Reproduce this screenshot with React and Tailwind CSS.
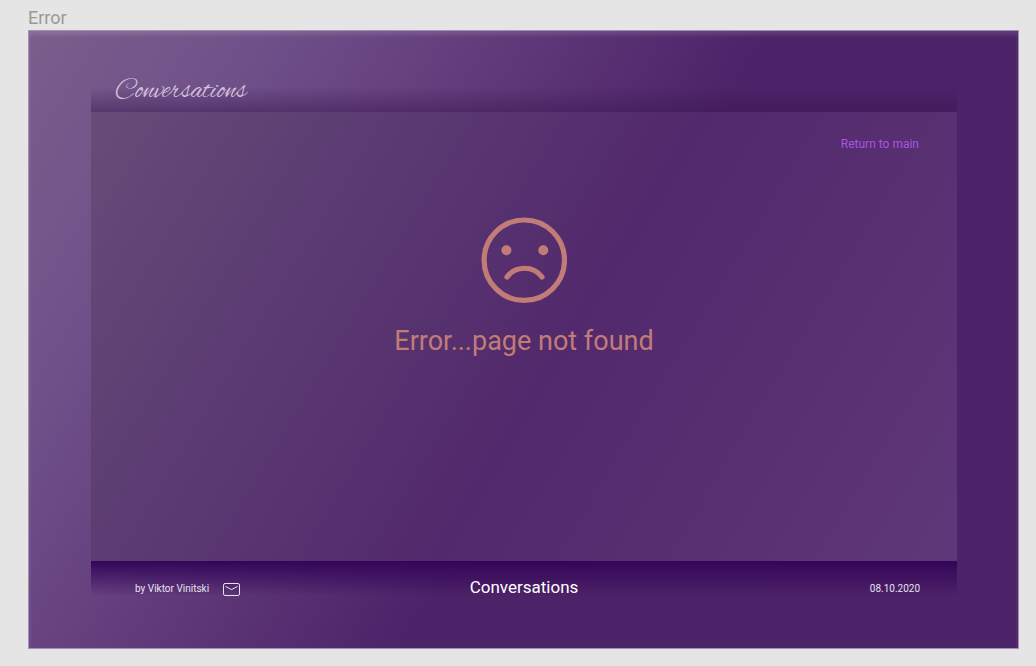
function SadFace() {
  return (
    <svg
      viewBox="0 0 86 86"
      className="size-[86px] text-[#c27c78]"
      fill="none"
      stroke="currentColor"
      role="img"
      aria-label="Sad face"
    >
      <circle cx="43.3" cy="43.2" r="40.2" strokeWidth="5.2" />
      <circle cx="25.4" cy="33.3" r="5" fill="currentColor" stroke="none" />
      <circle cx="62.3" cy="33.3" r="5" fill="currentColor" stroke="none" />
      <path d="M26 60C34.5 48.3 52.5 48.3 61 60" strokeWidth="5.2" strokeLinecap="round" />
    </svg>
  );
}

function Envelope() {
  return (
    <svg
      viewBox="0 0 17 13"
      className="h-[13px] w-[17px]"
      fill="none"
      stroke="currentColor"
      strokeLinecap="round"
      strokeLinejoin="round"
      aria-hidden="true"
    >
      <rect x="0.5" y="0.5" width="16" height="12" rx="1.6" />
      <path d="M2.8 3.6L8.5 6.6L14.2 3.6" />
    </svg>
  );
}

export default function App() {
  return (
    <div className="flex min-h-screen flex-col bg-[#e5e5e5] pt-2 pr-[17px] pb-[17px] pl-7 font-['Roboto',sans-serif]">
      <p className="h-[22px] text-lg leading-5 text-[#999999]">Error</p>
      <div className="flex grow flex-col border border-[#a58db4] bg-[linear-gradient(121deg,#7a5e8b_0%,#70528a_16%,#66427f_29%,#4c2268_55%,#4c2268_100%)] pr-[61px] pl-[62px] shadow-[inset_0_4px_4px_rgba(255,255,255,0.12)]">
        <header className="mt-[45px] flex h-9 items-center bg-linear-to-b from-[#3a1850]/0 from-30% to-[#3a1850]/50 px-6">
          <a
            href="#"
            className="pb-1 font-['Alex_Brush','Liberation_Serif',cursive] text-[28px] leading-7 text-[#d3c1dd]"
          >
            Conversations
          </a>
        </header>
        <main className="flex grow flex-col bg-[linear-gradient(121deg,#674c78_0%,#5b3b72_26%,#52296c_54%,#5f3879_100%)]">
          <a href="#" className="mt-6 mr-[38px] self-end text-xs leading-4 text-[#a855e0]">
            Return to main
          </a>
          <div className="mt-[65px] flex flex-col items-center">
            <SadFace />
            <h1 className="mt-5 text-[27px] leading-9 text-[#c27c78]">Error...page not found</h1>
          </div>
        </main>
        <footer className="mb-[52px] grid h-[35px] grid-cols-[1fr_auto_1fr] items-center bg-linear-to-b from-[#330559] to-[#4f1e74]/0 pt-4 text-white">
          <div className="flex items-center gap-[14px] pl-11 text-[10px] leading-4 text-[#e9e1ee]">
            <span>by Viktor Vinitski</span>
            <a href="mailto:viktor@example.com" aria-label="Send mail">
              <Envelope />
            </a>
          </div>
          <p className="pb-1 text-center text-[17px] leading-5">Conversations</p>
          <time dateTime="2020-10-08" className="pr-[37px] text-right text-[10px] leading-4 text-[#e9e1ee]">
            08.10.2020
          </time>
        </footer>
      </div>
    </div>
  );
}
